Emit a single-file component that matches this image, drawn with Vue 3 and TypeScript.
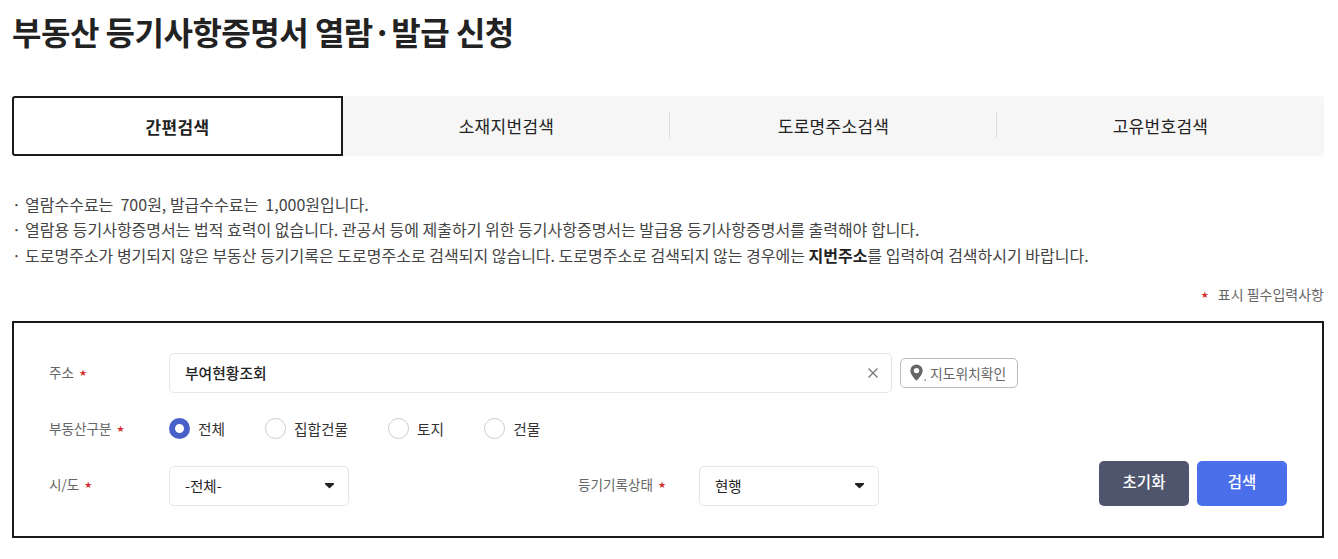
<script setup lang="ts">
const tabs = [
  { label: '간편검색', active: true },
  { label: '소재지번검색', active: false },
  { label: '도로명주소검색', active: false },
  { label: '고유번호검색', active: false },
]
const kinds = ['전체', '집합건물', '토지', '건물']
</script>

<template>
  <div class="page">
    <h1 class="title">부동산 등기사항증명서 열람·발급 신청</h1>

    <div class="tabs">
      <div v-for="tab in tabs" :key="tab.label" class="tab" :class="{ active: tab.active }">
        <span>{{ tab.label }}</span>
      </div>
    </div>

    <ul class="notice">
      <li>열람수수료는 &nbsp;700원, 발급수수료는 &nbsp;1,000원입니다.</li>
      <li>열람용 등기사항증명서는 법적 효력이 없습니다. 관공서 등에 제출하기 위한 등기사항증명서는 발급용 등기사항증명서를 출력해야 합니다.</li>
      <li>도로명주소가 병기되지 않은 부동산 등기기록은 도로명주소로 검색되지 않습니다. 도로명주소로 검색되지 않는 경우에는 <b>지번주소</b>를 입력하여 검색하시기 바랍니다.</li>
    </ul>

    <p class="required-note"><em class="star">★</em>표시 필수입력사항</p>

    <section class="box">
      <div class="row row-address">
        <label class="label up">주소<em class="star">★</em></label>
        <div class="address-input">
          <span>부여현황조회</span>
          <svg class="clear" width="12" height="12" viewBox="0 0 12 12">
            <path d="M1.5 1.5l9 9M10.5 1.5l-9 9" stroke="#777" stroke-width="1.3" fill="none" />
          </svg>
        </div>
        <button class="map-btn" type="button">
          <svg width="17" height="18" viewBox="0 0 17 18">
            <path d="M6.500 0.500a6.200 6.200 0 0 0-6.200 6.200c0 4 6.200 10 6.200 10s6.200-6 6.200-10a6.200 6.200 0 0 0-6.200-6.200z" fill="#666" />
            <circle cx="6.500" cy="6.600" r="2.700" fill="#fff" />
            <rect x="14.500" y="15.500" width="1.500" height="1.200" fill="#666" />
          </svg>
          <span>지도위치확인</span>
        </button>
      </div>

      <div class="row row-kind">
        <label class="label up">부동산구분<em class="star">★</em></label>
        <div class="radios">
          <div v-for="(kind, i) in kinds" :key="kind" class="radio" :class="{ on: i === 0 }">
            <i></i>
            <span>{{ kind }}</span>
          </div>
        </div>
      </div>

      <div class="row row-select">
        <label class="label down">시/도<em class="star">★</em></label>
        <div class="select"><span>-전체-</span><i></i></div>
        <label class="label label-status down">등기기록상태<em class="star">★</em></label>
        <div class="select"><span>현행</span><i></i></div>
        <div class="actions">
          <button class="btn reset" type="button">초기화</button>
          <button class="btn search" type="button">검색</button>
        </div>
      </div>
    </section>
  </div>
</template>

<style>
html,
body {
  margin: 0;
  background: #fff;
}
</style>

<style scoped>
.page {
  width: 1312px;
  margin-left: 12px;
  padding-top: 9px;
  font-family: 'Noto Sans CJK KR', 'Noto Sans', sans-serif;
  color: #222;
}
.title {
  margin: 0;
  font-size: 32px;
  line-height: 44px;
  font-weight: 700;
  letter-spacing: -0.5px;
  color: #222;
}
.tabs {
  display: flex;
  height: 60px;
  margin-top: 43px;
  background: #f6f6f6;
  border-radius: 4px;
}
.tab {
  flex: 1;
  display: flex;
  align-items: center;
  justify-content: center;
  position: relative;
  padding-bottom: 2px;
  box-sizing: border-box;
  font-size: 17px;
  letter-spacing: 0.3px;
  color: #222;
}
.tab + .tab + .tab::before {
  content: '';
  position: absolute;
  left: -1px;
  top: 16px;
  height: 26px;
  width: 1px;
  background: #ddd;
}
.tab.active {
  background: #fff;
  border: 2px solid #1a1a1a;
  border-radius: 3px 0 0 3px;
  padding: 1px 0 0;
  font-weight: 700;
}
.notice {
  list-style: none;
  margin: 35.500px 0 0;
  padding: 0;
  font-size: 16px;
  line-height: 25.500px;
  color: #444;
}
.notice li {
  position: relative;
  padding-left: 13px;
}
.notice li::before {
  content: '·';
  position: absolute;
  left: 0;
}
.notice b {
  color: #222;
}
.required-note {
  margin: 13.500px 0 0;
  height: 24px;
  line-height: 24px;
  text-align: right;
  font-size: 14px;
  color: #666;
}
.star {
  font-family: 'DejaVu Sans', sans-serif;
  font-style: normal;
  font-size: 9px;
  color: #d32f2f;
  margin-left: 5px;
  vertical-align: 2px;
}
.required-note .star {
  margin: 0 9px 0 0;
}
.box {
  box-sizing: border-box;
  height: 217px;
  margin-top: 15px;
  border: 2px solid #1a1a1a;
  padding: 30px 35px 0;
  background: #fff;
}
.row {
  display: flex;
  align-items: center;
}
.row-kind {
  margin-top: 16px;
  height: 40px;
}
.row-select {
  height: 45px;
  margin-top: 12px;
}
.label {
  width: 120px;
  flex: none;
  font-size: 13.600px;
  color: #666;
}
.label.up {
  padding-bottom: 2px;
}
.label.down {
  padding-top: 2px;
}
.address-input {
  box-sizing: border-box;
  width: 723px;
  height: 40px;
  border: 1px solid #e6e6e6;
  border-radius: 5px;
  display: flex;
  align-items: center;
  justify-content: space-between;
  padding: 0 12px 0 15px;
  font-size: 14.800px;
  font-weight: 500;
  color: #222;
}
.map-btn {
  box-sizing: border-box;
  margin-left: 8px;
  width: 118px;
  height: 30px;
  display: flex;
  align-items: center;
  gap: 3px;
  padding: 0 0 0 9px;
  background: #fff;
  border: 1px solid #bbb;
  border-radius: 5px;
  font-family: inherit;
  font-size: 13.800px;
  color: #666;
}
.radios {
  display: flex;
  gap: 40px;
}
.radio {
  display: flex;
  align-items: center;
  gap: 8px;
  font-size: 14.700px;
  color: #333;
}
.radio i {
  box-sizing: border-box;
  width: 21px;
  height: 21px;
  border-radius: 50%;
  border: 1px solid #ccc;
  background: #fff;
}
.radio.on i {
  border: 6px solid #4a60c9;
}
.select {
  box-sizing: border-box;
  width: 180px;
  height: 40px;
  margin-top: 5px;
  border: 1px solid #e6e6e6;
  border-radius: 5px;
  display: flex;
  align-items: center;
  justify-content: space-between;
  padding: 0 14px 0 15px;
  font-size: 14.500px;
  color: #222;
}
.select i {
  width: 9px;
  height: 6px;
  background: #222;
  clip-path: polygon(0 0, 100% 0, 100% 30%, 50% 100%, 0 30%);
}
.label-status {
  margin-left: 229px;
  width: 121px;
}
.actions {
  margin-left: auto;
  display: flex;
  gap: 8px;
}
.btn {
  width: 90px;
  height: 45px;
  padding: 0 0 4px;
  border: 0;
  border-radius: 5px;
  color: #fff;
  font-family: inherit;
  font-size: 15.500px;
  font-weight: 500;
}
.reset {
  background: #4f556c;
}
.search {
  background: #4b6fea;
}
</style>
